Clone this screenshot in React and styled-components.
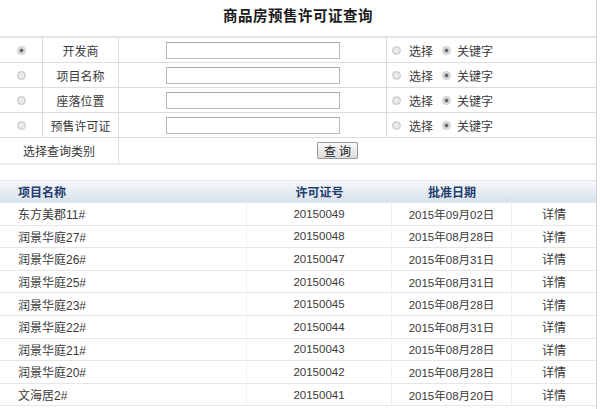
import { Fragment } from 'react';
import styled, { createGlobalStyle } from 'styled-components';

const GlobalStyle = createGlobalStyle`
  html, body {
    margin: 0;
    padding: 0;
    background: #fff;
  }
  body {
    font-family: "Liberation Sans", "Noto Sans CJK SC", sans-serif;
    font-size: 12px;
    color: #3a3a3a;
  }
`

const Page = styled.div`
  width: 596px;
  min-height: 409px;
  border-right: 1px solid #d4d4d4;
`

const Title = styled.h1`
  margin: 0;
  height: 36px;
  padding-top: 4px;
  box-sizing: border-box;
  text-align: center;
  font-size: 14.5px;
  font-weight: bold;
  color: #1a1a1a;
  letter-spacing: 0.5px;
`

const Form = styled.div`
  display: grid;
  grid-template-columns: 43px 76px 268px 209px;
  border-top: 2px solid #e4e4e4;
  border-bottom: 2px solid #ececec;
`

const Cell = styled.div`
  height: 25px;
  box-sizing: border-box;
  display: flex;
  align-items: center;
  justify-content: ${({ align }) => align || 'center'};
  border-bottom: ${({ last }) => (last ? 'none' : '1px solid #dcdcdc')};
  border-right: ${({ noRight }) => (noRight ? 'none' : '1px solid #dcdcdc')};
  grid-column: ${({ span }) => (span ? `span ${span}` : 'auto')};
  padding-left: ${({ pad }) => pad || 0}px;
`

const Radio = styled.span`
  display: inline-block;
  width: 9px;
  height: 9px;
  border-radius: 50%;
  box-sizing: border-box;
  border: 1px solid #c4c4c4;
  background: radial-gradient(circle, ${({ checked }) => (checked ? '#555 0, #777 1.5px, #e6e6e6 2.5px' : '#eee 0, #e4e4e4 3px')});
  margin-right: ${({ gap }) => gap || 0}px;
`

const Input = styled.div`
  width: 174px;
  height: 17px;
  box-sizing: border-box;
  border: 1px solid #b9b9b9;
  border-top-color: #a8a8a8;
  background: #fff;
`

const Option = styled.span`
  margin-right: ${({ gap }) => gap || 0}px;
`

const Button = styled.button`
  width: 41px;
  height: 17px;
  padding: 0;
  font-family: "Noto Sans CJK SC", sans-serif;
  font-size: 12px;
  line-height: 14px;
  color: #222;
  border: 1px solid #9a9a9a;
  border-radius: 1px;
  background: linear-gradient(#fafafa, #dcdcdc);
  letter-spacing: 3px;
  text-indent: 3px;
`

const Table = styled.div`
  margin-top: 15px;
  border-top: 1px solid #dfe4ea;
`

const Row = styled.div`
  display: grid;
  grid-template-columns: 247px 145px 120px 84px;
  height: ${({ head }) => (head ? 22 : 22.6)}px;
  box-sizing: border-box;
  border-bottom: 1px solid #e6e6e6;
  background: ${({ head }) => (head ? 'linear-gradient(#f6f8fb, #d8e1eb)' : '#fff')};
  color: ${({ head }) => (head ? '#233d6e' : 'inherit')};
  font-weight: ${({ head }) => (head ? 'bold' : 'normal')};
`

const Col = styled.div`
  display: flex;
  align-items: center;
  justify-content: ${({ left }) => (left ? 'flex-start' : 'center')};
  padding-left: ${({ left }) => (left ? 18 : 0)}px;
  border-right: ${({ line }) => (line ? '1px solid #f0f0f0' : 'none')};
  font-size: ${({ num }) => (num ? 11.5 : 12)}px;
`

const fields = [
  { label: '开发商', checked: true },
  { label: '项目名称' },
  { label: '座落位置' },
  { label: '预售许可证' },
]

const rows = [
  ['东方美郡11#', '20150049', '2015年09月02日'],
  ['润景华庭27#', '20150048', '2015年08月28日'],
  ['润景华庭26#', '20150047', '2015年08月31日'],
  ['润景华庭25#', '20150046', '2015年08月31日'],
  ['润景华庭23#', '20150045', '2015年08月28日'],
  ['润景华庭22#', '20150044', '2015年08月31日'],
  ['润景华庭21#', '20150043', '2015年08月28日'],
  ['润景华庭20#', '20150042', '2015年08月28日'],
  ['文海居2#', '20150041', '2015年08月20日'],
]

export default function App() {
  return (
    <Page>
      <GlobalStyle />
      <Title>商品房预售许可证查询</Title>
      <Form>
        {fields.map((f) => (
          <Fragment key={f.label}>
            <Cell><Radio checked={f.checked} /></Cell>
            <Cell>{f.label}</Cell>
            <Cell><Input /></Cell>
            <Cell align="flex-start" pad={5} noRight>
              <Radio gap={8} />
              <Option gap={9}>选择</Option>
              <Radio checked gap={6} />
              <Option>关键字</Option>
            </Cell>
          </Fragment>
        ))}
        <Cell span={2} last>选择查询类别</Cell>
        <Cell span={2} last noRight align="flex-start" pad={198}>
          <Button>查询</Button>
        </Cell>
      </Form>
      <Table>
        <Row head>
          <Col left>项目名称</Col>
          <Col>许可证号</Col>
          <Col>批准日期</Col>
          <Col />
        </Row>
        {rows.map((r) => (
          <Row key={r[1]}>
            <Col left line>{r[0]}</Col>
            <Col line num>{r[1]}</Col>
            <Col line num>{r[2]}</Col>
            <Col>详情</Col>
          </Row>
        ))}
      </Table>
    </Page>
  )
}
